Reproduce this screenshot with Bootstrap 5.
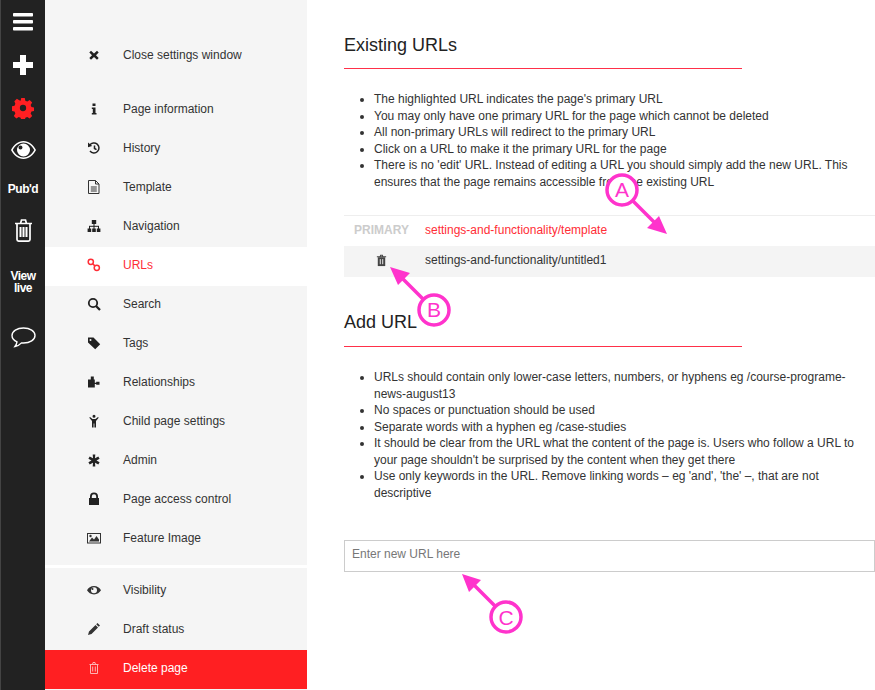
<!DOCTYPE html>
<html lang="en">
<head>
<meta charset="utf-8">
<title>URLs</title>
<link href="https://cdn.jsdelivr.net/npm/bootstrap@5.3.0/dist/css/bootstrap.min.css" rel="stylesheet">
<style>
html,body{height:690px;overflow:hidden}
body{font-family:"Liberation Sans",Arial,sans-serif;font-size:12px;color:#333;background:#fff;position:relative}
.rail{width:45px;background:#222;border-left:1px solid #444;flex:none;height:690px;color:#fff}
.rail-item{display:flex;align-items:center;justify-content:center;text-align:center;font-weight:700;font-size:12px;line-height:12px;letter-spacing:-.5px}
.r1{height:43px}.r2{height:43px}.r3{height:43px}.r4{height:41px}.r5{height:38px}.r6{height:44px}.r7{height:60px}.r8{height:51px}
.side{width:262px;flex:none;height:690px;background:#f5f5f5;padding-top:37px}
.side-link{display:flex;align-items:center;height:39px;color:#333;text-decoration:none;font-size:12px;padding-bottom:3px}
.side-link svg{width:14px;height:14px;margin-left:42px;margin-right:22px;flex:none}
.side-gap{height:15px}
.side-link.on{background:#fff;color:#ff2d36}
.side-link.del{background:#ff1f22;color:#fff}
.side-sep{height:3px;background:#fff;margin-top:6px;margin-bottom:4px}
.main{width:568px;flex:none;padding:0 0 0 37px;height:690px}
.ttl{font-size:18px;font-weight:400;color:#222;margin:0;line-height:22px}
.ttl-a{padding-top:34px}
.ttl-b{padding-top:34px}
.rule{width:398px;border-top:1px solid #ff3049;margin-top:12px}
.rule-b{margin-top:13px}
.tips{margin:0;padding:22px 0 0 30px;font-size:12px;line-height:16.5px;color:#333}
.urltbl{margin-top:25px;border-top:1px solid #eee}
.urlrow{display:flex;align-items:center}
.urlrow.a{height:30px;color:#ff2d36;padding-bottom:2px}
.urlrow.b{height:31px;background:#f4f4f4;padding-bottom:4px}
.urlcell{width:75px;margin-right:6px;flex:none;text-align:center;font-weight:700;color:#ccc;font-size:12px}
.urltxt{font-size:12px}
.urlin{margin-top:39px;height:32px;border:1px solid #ccc;border-radius:0;font-size:12px;padding:0 7px 4px;width:531px;color:#555}
.urlin::placeholder{color:#777;opacity:1}
.marks{position:absolute;left:0;top:0;width:875px;height:690px;pointer-events:none}
</style>
</head>
<body>
<div class="d-flex">
  <nav class="rail d-flex flex-column">
    <div class="rail-item r1"><svg width="22" height="18" viewBox="0 0 22 18"><g fill="#fff"><rect x="1" y="0" width="20" height="3.5" rx=".8"/><rect x="1" y="7" width="20" height="3.5" rx=".8"/><rect x="1" y="14" width="20" height="3.5" rx=".8"/></g></svg></div>
    <div class="rail-item r2"><svg width="20" height="20" viewBox="0 0 20 20"><path fill="#fff" d="M7 0h6v7h7v6h-7v7H7v-7H0V7h7z"/></svg></div>
    <div class="rail-item r3"><svg width="22" height="22" viewBox="0 0 22 22"><path fill="#ff1f22" fill-rule="evenodd" d="M9 0h4l.6 3 2.200.9 2.600-1.700 2.800 2.800-1.700 2.600.9 2.200 3 .6v4l-3 .6-.9 2.200 1.700 2.600-2.800 2.800-2.600-1.700-2.200.9-.6 3H9l-.6-3-2.200-.9-2.600 1.700-2.800-2.800 1.700-2.600-.9-2.200-3-.6V9l3-.6.9-2.200L1.400 3.600 4.200.8l2.600 1.700L8.400 3zM11 7.500a3.500 3.500 0 1 0 0 7 3.500 3.500 0 0 0 0-7z" transform="translate(1.100 1.100) scale(.9)"/></svg></div>
    <div class="rail-item r4"><svg width="25" height="18" viewBox="0 0 25 18"><path fill="#fff" fill-rule="evenodd" d="M12.500 0C7 0 3 3.500 0 9c3 5.500 7 9 12.500 9S22 14.500 25 9c-3-5.500-7-9-12.500-9zm0 1.500c4.500 0 8 2.800 10.700 7.500-2.700 4.700-6.200 7.500-10.700 7.500S4.500 13.700 1.800 9C4.500 4.300 8 1.500 12.500 1.500z"/><path fill="#fff" fill-rule="evenodd" d="M12.500 2.500a6.500 6.500 0 1 0 0 13 6.500 6.500 0 0 0 0-13zM9.500 4.500a2 2 0 1 1-.01 4 2 2 0 0 1 .01-4z"/></svg></div>
    <div class="rail-item r5">Pub'd</div>
    <div class="rail-item r6"><svg width="19" height="23" viewBox="0 0 19 23"><g fill="none" stroke="#fff" stroke-width="1.700"><path d="M1 4.500h17M3 4.500v16c0 1 .6 1.600 1.600 1.600h9.800c1 0 1.600-.6 1.600-1.600v-16M6.500 4.500l1-3.500h4l1 3.500"/><path stroke-width="2" d="M6.500 8v10M9.500 8v10M12.500 8v10"/></g></svg></div>
    <div class="rail-item r7">View<br>live</div>
    <div class="rail-item r8"><svg width="25" height="21" viewBox="0 0 25 21"><path fill="none" stroke="#fff" stroke-width="1.400" d="M12.500 1C6 1 1 4.200 1 8.500c0 2.800 2 5 5 6.300-.3 1.800-1 3.300-2 4.700 2.600-.6 5-1.900 6.500-3.600.7.100 1.300.1 2 .1 6.500 0 11.500-3.200 11.500-7.500S19 1 12.500 1z"/></svg></div>
  </nav>

  <aside class="side">
    <a class="side-link" href="#"><svg viewBox="0 0 14 14"><path fill="#222" d="M4 2.700 7 5.500l3-2.800 1.700 1.700L9 7.200l2.700 2.900L10 11.700 7 8.900l-3 2.800-1.700-1.600L5 7.200 2.300 4.400z"/></svg>Close settings window</a>
    <div class="side-gap"></div>
    <a class="side-link" href="#"><svg viewBox="0 0 14 14"><path fill="#222" d="M5.500 1.500h3v2.500h-3zM4.800 5.500h3.700v5.500h1v1.500H4.800V11h1V7h-1z"/></svg>Page information</a>
    <a class="side-link" href="#"><svg viewBox="0 0 14 14"><g fill="none" stroke="#222" stroke-width="1.500"><path d="M2.800 4.200A5 5 0 1 1 3 10"/><path d="M7.500 4.500v3l2 1.200"/></g><path fill="#222" d="M1 1.500l4.200 3.600L1 6.200z"/></svg>History</a>
    <a class="side-link" href="#"><svg viewBox="0 0 14 14"><g fill="none" stroke="#333" stroke-width="1"><path d="M1.500 .5h7l3.500 3.500v9.500H1.500z"/><path d="M8.500 .5v3.500h3.500"/><path stroke-width="1.200" d="M3.800 7h6M3.800 9h6M3.800 11h6"/></g></svg>Template</a>
    <a class="side-link" href="#"><svg viewBox="0 0 14 14"><g fill="#222"><rect x="4.800" y="1" width="4.400" height="4"/><rect x="6.500" y="4.500" width="1" height="3"/><rect x="2" y="6.800" width="10" height="1"/><rect x="2" y="7" width="1" height="3"/><rect x="11" y="7" width="1" height="3"/><rect x="6.500" y="7" width="1" height="3"/><rect x=".6" y="9.500" width="3.600" height="3.500"/><rect x="5.200" y="9.500" width="3.600" height="3.500"/><rect x="9.800" y="9.500" width="3.600" height="3.500"/></g></svg>Navigation</a>
    <a class="side-link on" href="#"><svg viewBox="0 0 14 14"><g fill="none" stroke="#ff2d36" stroke-width="1.500"><circle cx="3.800" cy="3.800" r="2.600"/><circle cx="9.800" cy="9.800" r="2.600"/><path d="M5.700 5.700l2.200 2.200"/></g></svg>URLs</a>
    <a class="side-link" href="#"><svg viewBox="0 0 14 14"><g fill="none" stroke="#222" stroke-width="1.800"><circle cx="6" cy="6" r="4.200"/><path stroke-width="2.300" d="M9 9l4 4"/></g></svg>Search</a>
    <a class="side-link" href="#"><svg viewBox="0 0 14 14"><path fill="#222" d="M1 1.500h5.500l6.700 6.700-5 5L1 6.500zM3.500 3a1 1 0 1 0 0 2 1 1 0 0 0 0-2z" fill-rule="evenodd"/></svg>Tags</a>
    <a class="side-link" href="#"><svg viewBox="0 0 14 14"><path fill="#222" d="M3.800 1.500h3v3H7.800v3.200h1.400V6.800H12.500v3H9.200v-.9H7.800V12.500H1V4.500h2.800z"/></svg>Relationships</a>
    <a class="side-link" href="#"><svg viewBox="0 0 14 14"><path fill="#222" d="M7 .8a1.500 1.500 0 1 1 0 3 1.500 1.500 0 0 1 0-3zM3 3l2.500 2h3L11 3l.7.7L9 7v6.500H7.400V9.500h-.8v4H5V7L2.300 3.700z"/></svg>Child page settings</a>
    <a class="side-link" href="#"><svg viewBox="0 0 14 14"><path fill="#222" d="M5.700 1.500h2.600l-.3 3.700 3.300-1.700 1.300 2.300L9.500 7.500l3.100 1.700-1.300 2.300L8 9.800l.3 3.700H5.700L6 9.800l-3.300 1.700-1.300-2.300 3.100-1.700-3.100-1.700 1.300-2.300L6 5.200z"/></svg>Admin</a>
    <a class="side-link" href="#"><svg viewBox="0 0 14 14"><path fill="#222" fill-rule="evenodd" d="M3 6V4.500a4 4 0 0 1 8 0V6h1v7H2V6zm1.800 0h4.400V4.500a2.200 2.200 0 0 0-4.400 0z"/></svg>Page access control</a>
    <a class="side-link" href="#"><svg viewBox="0 0 14 14" style="overflow:visible"><path fill="#333" fill-rule="evenodd" d="M0 2h14v10.500H0zM1 3v8.500h12V3z"/><path fill="#333" d="M2 10.500l3-4 2 2 2.500-3.500 2.500 3.500v2z"/><circle cx="3.500" cy="5" r="1.200" fill="#333"/></svg>Feature Image</a>
    <div class="side-sep"></div>
    <a class="side-link" href="#"><svg viewBox="0 0 14 14" style="overflow:visible"><path fill="#333" fill-rule="evenodd" d="M7 3C3.800 3 1.300 5 0 7.200c1.300 2.200 3.800 4.200 7 4.200s5.700-2 7-4.200C12.700 5 10.200 3 7 3zm0 1.200a3 3 0 1 1 0 6 3 3 0 0 1 0-6zM5.500 5a1 1 0 1 0 0 2 1 1 0 0 0 0-2z"/></svg>Visibility</a>
    <a class="side-link" href="#"><svg viewBox="0 0 14 14"><path fill="#333" d="M10.500 1l2.500 2.500-1.300 1.300-2.500-2.500zM8.500 3l2.500 2.500-6.500 6.500L1 13l1-3.500z"/></svg>Draft status</a>
    <a class="side-link del" href="#"><svg viewBox="0 0 14 14"><g fill="none" stroke="#ffb3b3" stroke-width="1"><path d="M2.500 3.500h9M3.500 3.500v9h7v-9M5.500 3.500l.5-2h2l.5 2"/><path d="M5.700 5.500v5M8.300 5.500v5"/></g></svg>Delete page</a>
  </aside>

  <main class="main">
    <h2 class="ttl ttl-a">Existing URLs</h2>
    <div class="rule"></div>
    <ul class="tips">
      <li>The highlighted URL indicates the page's primary URL</li>
      <li>You may only have one primary URL for the page which cannot be deleted</li>
      <li>All non-primary URLs will redirect to the primary URL</li>
      <li>Click on a URL to make it the primary URL for the page</li>
      <li>There is no 'edit' URL. Instead of editing a URL you should simply add the new URL. This ensures that the page remains accessible from the existing URL</li>
    </ul>
    <div class="urltbl">
      <div class="urlrow a"><div class="urlcell">PRIMARY</div><div class="urltxt">settings-and-functionality/template</div></div>
      <div class="urlrow b"><div class="urlcell"><svg width="13" height="13" viewBox="0 0 14 14"><path fill="#444" d="M3 3.500h8v9.500H3z"/><path fill="none" stroke="#444" stroke-width="1.100" d="M2 3h10M5.500 3l.5-1.700h2l.5 1.700"/><path stroke="#f4f4f4" d="M5.700 5.500v5.500M8.300 5.500v5.500"/></svg></div><div class="urltxt">settings-and-functionality/untitled1</div></div>
    </div>
    <h2 class="ttl ttl-b">Add URL</h2>
    <div class="rule rule-b"></div>
    <ul class="tips">
      <li>URLs should contain only lower-case letters, numbers, or hyphens eg /course-programe-news-august13</li>
      <li>No spaces or punctuation should be used</li>
      <li>Separate words with a hyphen eg /case-studies</li>
      <li>It should be clear from the URL what the content of the page is. Users who follow a URL to your page shouldn't be surprised by the content when they get there</li>
      <li>Use only keywords in the URL. Remove linking words – eg 'and', 'the' –, that are not descriptive</li>
    </ul>
    <input class="form-control urlin" type="text" placeholder="Enter new URL here">
  </main>
</div>

<svg class="marks" viewBox="0 0 875 690">
  <g fill="#fff" stroke="#ff33cc" stroke-width="3.500">
    <circle cx="622" cy="190" r="15"/>
    <circle cx="434" cy="310" r="15"/>
    <circle cx="506" cy="617" r="15"/>
  </g>
  <path fill="none" stroke="#ff33cc" stroke-width="3.500" d="M633 201l26 26M423 299l-21-21M495 606l-22-22"/>
  <g fill="#ff33cc">
    <path d="M667 234l-20-6 12-12zM390 267l20 6-12 12zM462 574l19 6-12 12z"/>
  </g>
  <g fill="#ff33cc" font-family="Liberation Sans,Arial,sans-serif" font-size="21" text-anchor="middle">
    <text x="622" y="197">A</text>
    <text x="434" y="317">B</text>
    <text x="506" y="625">C</text>
  </g>
</svg>
<script src="https://cdn.jsdelivr.net/npm/bootstrap@5.3.0/dist/js/bootstrap.bundle.min.js"></script>
</body>
</html>
